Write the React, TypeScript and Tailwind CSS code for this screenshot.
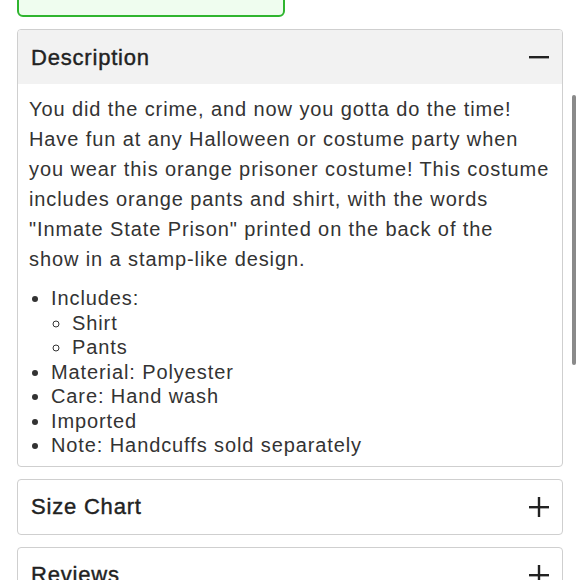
import React from "react";

function Minus() {
  return (
    <svg width="20" height="20" viewBox="0 0 20 20" className="shrink-0">
      <rect x="0" y="9" width="20" height="2.4" fill="#222" />
    </svg>
  );
}
function Plus() {
  return (
    <svg width="20" height="20" viewBox="0 0 20 20" className="shrink-0">
      <rect x="0" y="9" width="20" height="2.4" fill="#222" />
      <rect x="8.8" y="0" width="2.4" height="20" fill="#222" />
    </svg>
  );
}

export default function App() {
  return (
    <div
      className="relative w-[580px] h-[580px] overflow-hidden bg-white text-[#333]"
      style={{ fontFamily: '"Liberation Sans", Arial, sans-serif' }}
    >
      <div className="ml-[17px] mt-[-30px] w-[268px] h-[47px] rounded-[6px] border-2 border-[#2fb52f] bg-[#effdef]" />
      <div className="mx-[17px] mt-[12px] w-[546px] flex flex-col gap-[12px]">
        <div className="rounded-[4px] border border-[#cfcfcf] overflow-hidden">
          <div className="h-[54px] bg-[#f2f2f2] flex items-center justify-between pl-[13px] pr-[13px]">
            <span className="text-[22px] text-[#222] tracking-[0.8px] [-webkit-text-stroke:0.4px_#222]">Description</span>
            <Minus />
          </div>
          <div className="pl-[11px] pr-[8px] pt-[10px] pb-[8px] text-[20px] leading-[30px] tracking-[0.9px]">
            <p className="whitespace-nowrap">
              You did the crime, and now you gotta do the time!
              <br />
              Have fun at any Halloween or costume party when
              <br />
              you wear this orange prisoner costume! This costume
              <br />
              includes orange pants and shirt, with the words
              <br />
              "Inmate State Prison" printed on the back of the
              <br />
              show in a stamp-like design.
            </p>
            <ul className="mt-[12px] leading-[24.5px] list-disc pl-[22px]">
              <li>
                Includes:
                <ul className="list-[circle] pl-[21px]">
                  <li>Shirt</li>
                  <li>Pants</li>
                </ul>
              </li>
              <li>Material: Polyester</li>
              <li>Care: Hand wash</li>
              <li>Imported</li>
              <li>Note: Handcuffs sold separately</li>
            </ul>
          </div>
        </div>
        <div className="rounded-[4px] border border-[#cfcfcf] h-[56px] shrink-0 flex items-center justify-between pl-[13px] pr-[13px]">
          <span className="text-[22px] text-[#222] tracking-[0.8px] [-webkit-text-stroke:0.4px_#222]">Size Chart</span>
          <Plus />
        </div>
        <div className="rounded-[4px] border border-[#cfcfcf] h-[56px] shrink-0 flex items-center justify-between pl-[13px] pr-[13px]">
          <span className="text-[22px] text-[#222] tracking-[0.8px] [-webkit-text-stroke:0.4px_#222]">Reviews</span>
          <Plus />
        </div>
      </div>
      <div className="absolute left-[572px] top-[95px] w-[4px] h-[270px] rounded-full bg-[#8a8a8a]" />
    </div>
  );
}
